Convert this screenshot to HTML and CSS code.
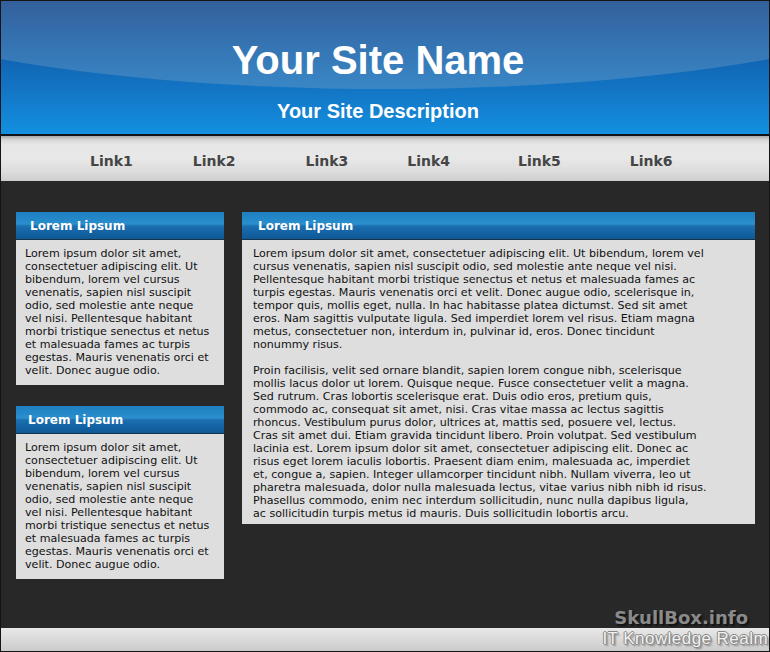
FILE: index.html
```html
<!DOCTYPE html>
<html lang="en">
<head>
<meta charset="utf-8">
<title>Your Site Name</title>
<link rel="stylesheet" href="styles.css">
</head>
<body>
<div class="page">
  <header class="masthead">
    <h1 class="site-name">Your Site Name</h1>
    <p class="site-desc">Your Site Description</p>
  </header>
  <nav class="nav">
    <a class="nav-link" href="#">Link1</a>
    <a class="nav-link" href="#">Link2</a>
    <a class="nav-link" href="#">Link3</a>
    <a class="nav-link" href="#">Link4</a>
    <a class="nav-link" href="#">Link5</a>
    <a class="nav-link" href="#">Link6</a>
  </nav>
  <div class="main">
    <aside class="sidebar">
      <section class="box box-side">
        <h2 class="box-title">Lorem Lipsum</h2>
        <div class="box-body">Lorem ipsum dolor sit amet,<br>consectetuer adipiscing elit. Ut<br>bibendum, lorem vel cursus<br>venenatis, sapien nisl suscipit<br>odio, sed molestie ante neque<br>vel nisi. Pellentesque habitant<br>morbi tristique senectus et netus<br>et malesuada fames ac turpis<br>egestas. Mauris venenatis orci et<br>velit. Donec augue odio.</div>
      </section>
      <section class="box box-side box-side-alt">
        <h2 class="box-title">Lorem Lipsum</h2>
        <div class="box-body">Lorem ipsum dolor sit amet,<br>consectetuer adipiscing elit. Ut<br>bibendum, lorem vel cursus<br>venenatis, sapien nisl suscipit<br>odio, sed molestie ante neque<br>vel nisi. Pellentesque habitant<br>morbi tristique senectus et netus<br>et malesuada fames ac turpis<br>egestas. Mauris venenatis orci et<br>velit. Donec augue odio.</div>
      </section>
    </aside>
    <section class="box box-content">
      <h2 class="box-title">Lorem Lipsum</h2>
      <div class="box-body">
        <p class="para">Lorem ipsum dolor sit amet, consectetuer adipiscing elit. Ut bibendum, lorem vel<br>cursus venenatis, sapien nisl suscipit odio, sed molestie ante neque vel nisi.<br>Pellentesque habitant morbi tristique senectus et netus et malesuada fames ac<br>turpis egestas. Mauris venenatis orci et velit. Donec augue odio, scelerisque in,<br>tempor quis, mollis eget, nulla. In hac habitasse platea dictumst. Sed sit amet<br>eros. Nam sagittis vulputate ligula. Sed imperdiet lorem vel risus. Etiam magna<br>metus, consectetuer non, interdum in, pulvinar id, eros. Donec tincidunt<br>nonummy risus.</p>
        <p class="para">Proin facilisis, velit sed ornare blandit, sapien lorem congue nibh, scelerisque<br>mollis lacus dolor ut lorem. Quisque neque. Fusce consectetuer velit a magna.<br>Sed rutrum. Cras lobortis scelerisque erat. Duis odio eros, pretium quis,<br>commodo ac, consequat sit amet, nisi. Cras vitae massa ac lectus sagittis<br>rhoncus. Vestibulum purus dolor, ultrices at, mattis sed, posuere vel, lectus.<br>Cras sit amet dui. Etiam gravida tincidunt libero. Proin volutpat. Sed vestibulum<br>lacinia est. Lorem ipsum dolor sit amet, consectetuer adipiscing elit. Donec ac<br>risus eget lorem iaculis lobortis. Praesent diam enim, malesuada ac, imperdiet<br>et, congue a, sapien. Integer ullamcorper tincidunt nibh. Nullam viverra, leo ut<br>pharetra malesuada, dolor nulla malesuada lectus, vitae varius nibh nibh id risus.<br>Phasellus commodo, enim nec interdum sollicitudin, nunc nulla dapibus ligula,<br>ac sollicitudin turpis metus id mauris. Duis sollicitudin lobortis arcu.</p>
      </div>
    </section>
  </div>
  <footer class="footer"></footer>
  <div class="watermark">
    <span class="wm-brand">SkullBox.info</span>
    <span class="wm-tag">IT Knowledge Realm</span>
  </div>
</div>
</body>
</html>
```
FILE: styles.css
```css
* { box-sizing: border-box; }
html, body { margin: 0; padding: 0; background: #282828; }
body { font-family: "DejaVu Sans", Verdana, sans-serif; }

.page {
  position: relative;
  width: 770px;
  height: 652px;
  border: 1px solid #141414;
  display: flex;
  flex-direction: column;
  overflow: hidden;
  background: #282828;
}

/* Masthead */
.masthead {
  position: relative;
  height: 135px;
  flex: none;
  border-bottom: 2px solid #101418;
  background: linear-gradient(to bottom, #0f5ca8 0, #1166b4 60px, #1379c8 95px, #1390e0 133px);
  overflow: hidden;
  display: flex;
  flex-direction: column;
  align-items: center;
  padding: 39px 14px 0 0;
}
.masthead::before {
  content: "";
  position: absolute;
  left: -216px;
  top: -170px;
  width: 1200px;
  height: 258px;
  border-radius: 50%;
  background: linear-gradient(to bottom, #33609b 0, #33609b 170px, #3470ae 205px, #3a87c6 258px);
}
.site-name {
  position: relative;
  margin: 0;
  font-family: "Liberation Sans", Arial, sans-serif;
  font-weight: bold;
  font-size: 40px;
  line-height: 40px;
  color: #fff;
}
.site-desc {
  position: relative;
  margin: 21px 0 0;
  font-family: "Liberation Sans", Arial, sans-serif;
  font-weight: bold;
  font-size: 20px;
  line-height: 20px;
  color: #fff;
}

/* Nav */
.nav {
  height: 45px;
  flex: none;
  display: flex;
  align-items: center;
  padding-left: 89px;
  background: linear-gradient(to bottom, #a8a8a8 0, #d8d8d8 4px, #e6e6e6 8px, #e8e8e8 22px, #dcdcdc 36px, #cdcdcd 45px);
}
.nav-link {
  font-weight: bold;
  font-size: 14px;
  line-height: 16px;
  color: #454545;
  text-decoration: none;
  margin-top: 4px;
}
.nav-link:nth-child(2) { margin-left: 60px; }
.nav-link:nth-child(3) { margin-left: 70px; }
.nav-link:nth-child(4) { margin-left: 59px; }
.nav-link:nth-child(5) { margin-left: 68px; }
.nav-link:nth-child(6) { margin-left: 69px; }

/* Main area */
.main {
  flex: 1;
  display: flex;
  align-items: flex-start;
  gap: 18px;
  padding: 31px 0 0 15px;
  background: #282828;
}
.sidebar {
  width: 208px;
  display: flex;
  flex-direction: column;
  gap: 21px;
}

.box { background: #dedede; }
.box-title {
  margin: 0;
  height: 28px;
  padding: 2px 0 0 14px;
  border-bottom: 1px solid #14344e;
  background: linear-gradient(to bottom, #1f7fc0 0, #2589c9 8px, #2d8fcd 12px, #1b6fb0 14px, #1564a5 20px, #0f5894 27px);
  color: #fff;
  font-weight: bold;
  font-size: 12px;
  line-height: 25px;
}
.box-side-alt .box-title { padding-left: 12px; }
.box-body {
  color: #111;
  font-size: 11.1px;
  line-height: 13px;
  white-space: nowrap;
}
.box-side .box-body { padding: 7px 9px 8px 9px; }

.box-content { width: 513px; }
.box-content .box-title { padding-left: 16px; }
.box-content .box-body { padding: 7px 11px 4px 11px; }
.para { margin: 0 0 13px; }
.para:last-child { margin-bottom: 0; }

/* Footer */
.footer {
  height: 23px;
  flex: none;
  background: linear-gradient(to bottom, #e8e8e8 0, #dedede 8px, #cbcbcb 23px);
}

/* Watermark overlay */
.watermark {
  position: absolute;
  right: 1px;
  bottom: 3px;
  display: flex;
  flex-direction: column;
  align-items: flex-end;
}
.wm-brand {
  margin-right: 20px;
  font-family: "DejaVu Sans", Verdana, sans-serif;
  font-weight: bold;
  font-size: 18px;
  line-height: 20px;
  color: #8a8a8a;
  text-shadow: 2px 2px 2px #111;
}
.wm-tag {
  margin-top: 2px;
  font-family: "Liberation Sans", Arial, sans-serif;
  font-size: 17px;
  line-height: 18px;
  letter-spacing: 0.45px;
  color: #f2f2f2;
  text-shadow: 1px 0 0 #888, -1px 0 0 #888, 0 1px 0 #888, 0 -1px 0 #888, 2px 2px 2px #777;
}
```
